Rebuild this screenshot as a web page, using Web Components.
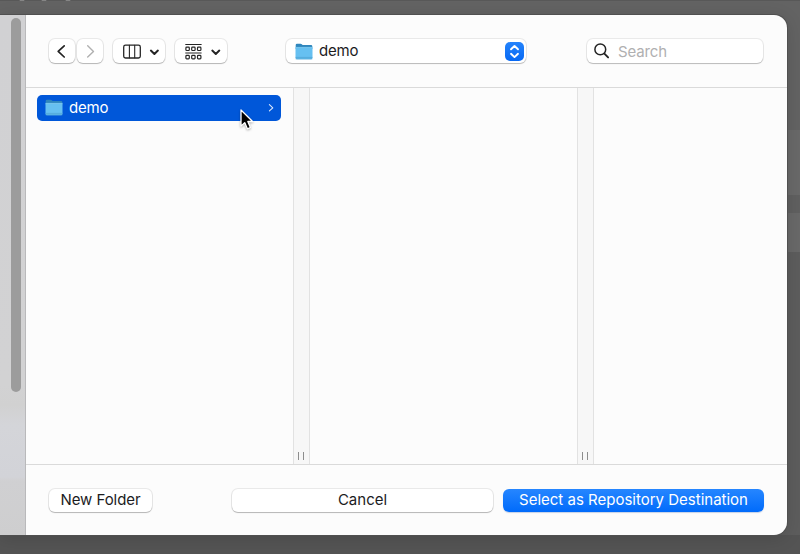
<!DOCTYPE html>
<html lang="en">
<head>
<meta charset="utf-8">
<title>Select folder</title>
<style>
html,body{margin:0;height:100%}
body{overflow:hidden;font-family:Inter,"Liberation Sans",sans-serif;font-size:15px;color:#1c1c1e}
</style>
</head>
<body>
<file-dialog></file-dialog>
<script>
const define = (name, html) => {
  const t = document.createElement('template');
  t.innerHTML = '<style>*{box-sizing:border-box}svg{display:block}</style>' + html;
  customElements.define(name, class extends HTMLElement {
    constructor() {
      super();
      this.attachShadow({mode: 'open'}).appendChild(t.content.cloneNode(true));
    }
  });
};

define('folder-icon', `
<style>:host{display:block;width:18px;height:17px;flex:none}</style>
<svg width="18" height="17" viewBox="0 0 18 17">
  <path d="M.7 2.1Q.7.8 2 .8H5.5Q6.2.8 6.8 1.3L7.6 2H16Q17.3 2 17.3 3.2V6H.7Z" fill="#2f86bd"/>
  <path d="M.5 4.4H17.5V14.8Q17.5 16.2 16.2 16.2H1.8Q.5 16.2.5 14.8Z" fill="#66c0f1"/>
  <path d="M.5 4.4H17.5" stroke="#87d0f5" stroke-width=".8"/>
  <path d="M.6 14.4H17.4" stroke="#51a5d6" stroke-width=".8"/>
  <path d="M.7 15.9H17.3" stroke="#4d9dcc" stroke-width=".7"/>
</svg>`);

define('mac-button', `
<style>
:host{display:flex;align-items:center;justify-content:center;height:24px;border-radius:6px;background:#fff;
 box-shadow:0 0 0 1px rgba(0,0,0,.075),0 1px 1px rgba(0,0,0,.22);white-space:nowrap;box-sizing:border-box;flex:none;line-height:18px;padding-bottom:1px}
:host([primary]){background:linear-gradient(#2686ff,#006bfb);color:#fff;box-shadow:0 1px 1px rgba(0,60,160,.22)}
</style><slot></slot>`);

define('search-field', `
<style>
:host{display:flex;align-items:center;gap:8px;width:176px;height:24px;padding-left:7px;border-radius:6px;background:#fff;
 box-shadow:0 0 0 1px rgba(0,0,0,.07),0 1px 1px rgba(0,0,0,.2);color:#b0b0b1;box-sizing:border-box;flex:none}
span{line-height:18px;padding-top:2px;letter-spacing:-.15px}
</style>
<svg width="16" height="16" viewBox="0 0 16 16" fill="none" stroke="#242424" stroke-linecap="round"><circle cx="6.3" cy="6.4" r="5.4" stroke-width="1.5"/><path d="M10.4 10.6L14.1 14.4" stroke-width="1.9"/></svg>
<span><slot></slot></span>`);

define('path-popup', `
<style>
:host{display:flex;align-items:center;width:240px;height:24px;padding:0 2px 0 9px;border-radius:6px;background:#fff;
 box-shadow:0 0 0 1px rgba(0,0,0,.075),0 1px 1px rgba(0,0,0,.2);box-sizing:border-box;flex:none}
span{flex:1;padding:0 0 0 6px;line-height:18px;letter-spacing:-.2px}
div{width:19px;height:19px;border-radius:5px;background:linear-gradient(#2583fb,#0769f4)}
</style>
<folder-icon></folder-icon><span><slot></slot></span>
<div><svg width="19" height="19" viewBox="0 0 19 19" fill="none" stroke="#fff" stroke-width="1.9" stroke-linecap="round" stroke-linejoin="round"><path d="M6 7.3L9.5 4L13 7.3M6 11.8L9.5 15.1L13 11.8"/></svg></div>`);

define('folder-row', `
<style>
:host{display:flex;align-items:center;height:26px;width:244px;padding:0 6px 0 8px;border-radius:5px;background:#0057d9;color:#fff;box-sizing:border-box}
span{flex:1;padding:0 0 1px 6px;line-height:18px;letter-spacing:-.2px}
folder-icon{margin-bottom:1px}
</style>
<folder-icon></folder-icon><span><slot></slot></span>
<svg width="8" height="10" viewBox="0 0 8 10" fill="none" stroke="#dce9fc" stroke-width="1.1" stroke-linecap="round" stroke-linejoin="round"><path d="M2.4 1.7L5.8 4.8L2.4 7.9"/></svg>`);

define('column-divider', `
<style>
:host{display:flex;flex:none;width:17px;border:solid #e2e2e2;border-width:0 1px;background:#f7f7f7;box-sizing:border-box;align-items:flex-end;justify-content:center;padding:0 1px 4px 0;gap:4px}
i{width:1px;height:8px;background:#8d8d8d}
</style><i></i><i></i>`);

define('side-strip', `
<style>
:host{display:flex;justify-content:flex-end;width:26px;flex:none;box-sizing:border-box;padding:3px 4px 0 0;border-right:1px solid #b9b9bb;
 background:linear-gradient(#d1d1d3 0,#d2d2d3 370px,#d1d1d1 390px,#d4d5d9 410px,#d2d3d8 462px,#d0d0d2 466px,#cececf)}
div{width:10px;height:374px;border-radius:5px;background:#9c9c9c}
</style><div></div>`);

define('tool-bar', `
<style>
:host{display:flex;height:73px;flex:none;border-bottom:1px solid #dadada;box-sizing:border-box;padding:24px 24px 0 23px}
.nav{display:flex;gap:2px}
.view{margin-left:10px;width:52px}
.group{margin-left:10px;width:52px}
mac-button{height:24px;padding:0}
.nav mac-button{width:26px}
path-popup{margin-left:59px}
search-field{margin-left:auto}
</style>
<div class="nav">
<mac-button><svg width="26" height="23" fill="none" stroke="#222" stroke-width="1.7" stroke-linecap="round" stroke-linejoin="round"><path d="M15.2 5.8L9.2 11.4L15.2 17"/></svg></mac-button>
<mac-button><svg width="26" height="23" fill="none" stroke="#b0b0b0" stroke-width="1.4" stroke-linecap="round" stroke-linejoin="round"><path d="M10.7 5.8L16.5 11.4L10.7 17"/></svg></mac-button>
</div>
<mac-button class="view"><svg width="52" height="23" fill="none" stroke="#252525" stroke-linecap="round" stroke-linejoin="round"><rect x="10.7" y="5.2" width="16.6" height="12.8" rx="1.8" stroke-width="1.3"/><path d="M16.4 5.4V17.8M21.7 5.4V17.8" stroke-width="1.1"/><path d="M37.9 10.6L41.4 13.9L44.9 10.6" stroke-width="2"/></svg></mac-button>
<mac-button class="group"><svg width="52" height="23" fill="none" stroke="#252525"><path d="M10.3 4.5H26.6M10.3 13H26.6" stroke-width="1.1"/><g stroke-width="1.2"><rect x="10.9" y="7.1" width="3.4" height="3.4" rx=".8"/><rect x="16.7" y="7.1" width="3.4" height="3.4" rx=".8"/><rect x="22.5" y="7.1" width="3.4" height="3.4" rx=".8"/><rect x="10.9" y="15.4" width="3.4" height="3.4" rx=".8"/><rect x="16.7" y="15.4" width="3.4" height="3.4" rx=".8"/><rect x="22.5" y="15.4" width="3.4" height="3.4" rx=".8"/></g><path d="M37.3 10.6L40.8 13.9L44.3 10.6" stroke-width="2" stroke-linecap="round" stroke-linejoin="round"/></svg></mac-button>
<path-popup>demo</path-popup>
<search-field>Search</search-field>`);

define('column-browser', `
<style>
:host{display:flex;flex:1;min-height:0}
.col{width:267px;flex:none;padding:7px 0 0 11px}
</style>
<div class="col"><folder-row>demo</folder-row></div>
<column-divider></column-divider><div class="col"></div><column-divider></column-divider>`);

define('action-bar', `
<style>
:host{display:flex;height:71px;flex:none;border-top:1px solid #dadada;box-sizing:border-box;padding:24px 23px 0 23px}
.new{width:103px;letter-spacing:-.06px}.cancel{width:261px;margin-left:80px}.ok{width:261px;margin-left:auto}
mac-button{height:23px}
</style>
<mac-button class="new">New Folder</mac-button>
<mac-button class="cancel">Cancel</mac-button>
<mac-button class="ok" primary>Select as Repository Destination</mac-button>`);

define('mouse-pointer', `
<style>:host{position:absolute;left:239px;top:108px;filter:drop-shadow(0 1px 1px rgba(0,0,0,.3))}</style>
<svg width="16" height="24" viewBox="0 0 16 24"><path d="M2 2V18.1L5.7 14.6L8.4 20.8L11.4 19.5L8.8 13.5H13.6Z" fill="#000" stroke="#fff" stroke-width="1.3" stroke-linejoin="round"/></svg>`);

define('file-dialog', `
<style>
:host{display:block;position:relative;width:800px;height:554px;overflow:hidden;padding-top:15px;box-sizing:border-box;
 background:radial-gradient(3px 1px at 22px 0,#858585 90%,transparent),radial-gradient(3px 1px at 44px 0,#858585 90%,transparent),radial-gradient(3px 1px at 68px 0,#858585 90%,transparent),
 linear-gradient(#585858 0 1px,transparent 1px),linear-gradient(#636363 0 130px,#696969 130px 195px,#606060 195px 213px,#696969 213px 252px,#5d5d5d 252px 535px,#545454 535px)}
.win{display:flex;width:787px;height:520px;border-radius:0 13px 13px 0;overflow:hidden;background:#fcfcfc}
.shade{width:787px;height:520px;border-radius:0 13px 13px 0;box-shadow:0 0 0 1px #505050,0 3px 18px rgba(0,0,0,.14)}
.main{flex:1;display:flex;flex-direction:column;min-width:0}
</style>
<div class="shade"><div class="win"><side-strip></side-strip>
<div class="main"><tool-bar></tool-bar><column-browser></column-browser><action-bar></action-bar></div></div></div>
<mouse-pointer></mouse-pointer>`);
</script>
</body>
</html>
